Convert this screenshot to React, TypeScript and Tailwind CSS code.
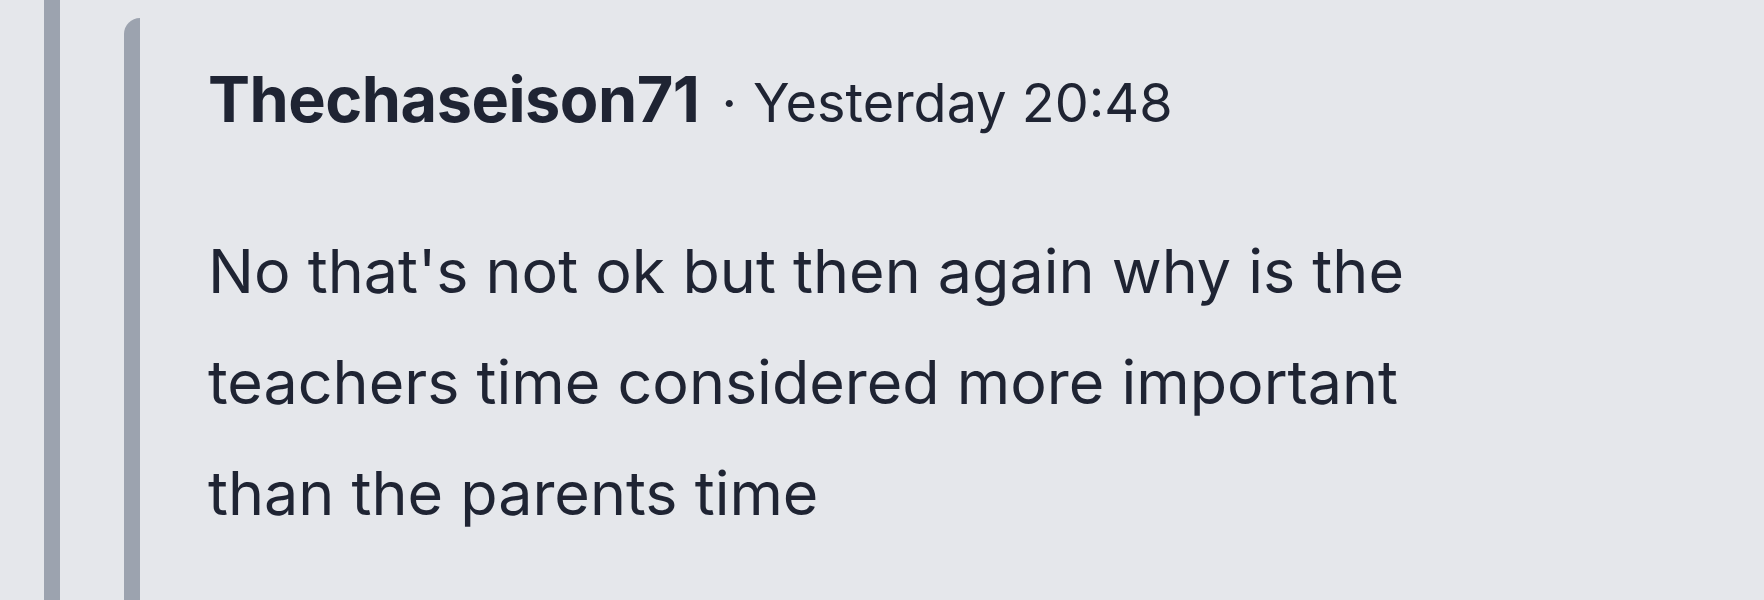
export default function App() {
  return (
    <div
      className="flex h-[600px] w-[1764px] overflow-hidden bg-[#e5e7eb] pl-[44px]"
      style={{ fontFamily: 'Inter, "Noto Sans", sans-serif' }}
    >
      <div className="h-full w-[16px] shrink-0 bg-[#9ca3af]" />
      <div className="ml-[64px] mt-[18px] flex flex-1">
        <div className="w-[16px] shrink-0 rounded-tl-[18px] bg-[#9ca3af]" />
        <div className="pl-[68px] pt-[41px]">
          <div className="flex items-baseline text-[#1f2433]">
            <span className="text-[63px] font-bold leading-[80px] tracking-[-0.5px]">Thechaseison71</span>
            <span className="ml-[22px] text-[54px] leading-[80px]">·</span>
            <span className="ml-[16px] text-[54px] leading-[80px]">Yesterday 20:48</span>
          </div>
          <p className="mt-[73px] w-[1250px] text-[61px] leading-[111px] text-[#1f2433]">
            No that's not ok but then again why is the teachers time considered more important than the parents time
          </p>
        </div>
      </div>
    </div>
  );
}
